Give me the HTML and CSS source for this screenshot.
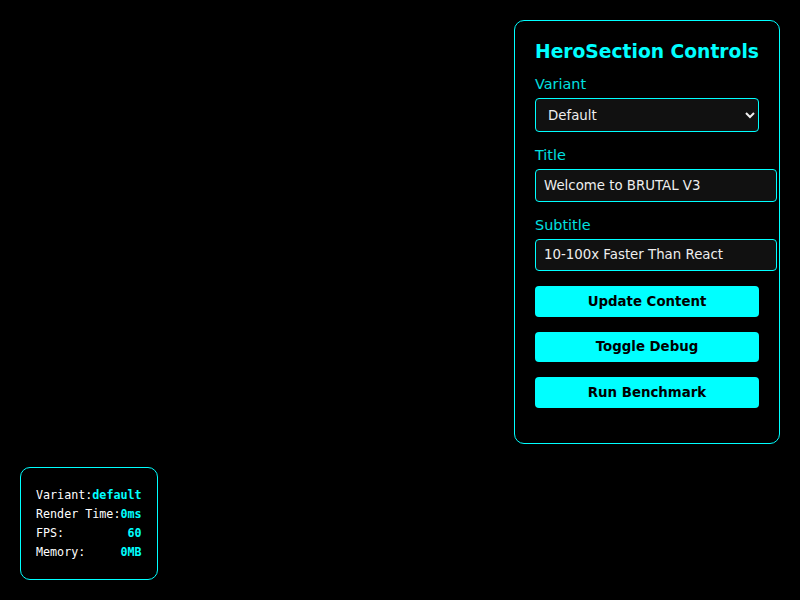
FILE: index.html
```html
<!DOCTYPE html>
<html>
<head>
<meta charset="utf-8">
<link rel="stylesheet" href="styles.css">
</head>
<body>
<div class="controls">
  <h3 class="controls-title">HeroSection Controls</h3>
  <div class="group">
    <label class="label">Variant</label>
    <select class="select">
      <option>Default</option>
      <option>Minimal</option>
      <option>Split</option>
    </select>
  </div>
  <div class="group">
    <label class="label">Title</label>
    <input class="input" type="text" value="Welcome to BRUTAL V3">
  </div>
  <div class="group">
    <label class="label">Subtitle</label>
    <input class="input" type="text" value="10-100x Faster Than React">
  </div>
  <button class="btn">Update Content</button>
  <button class="btn">Toggle Debug</button>
  <button class="btn">Run Benchmark</button>
</div>

<div class="debug">
  <div class="row"><span class="key">Variant:</span><span class="val">default</span></div>
  <div class="row"><span class="key">Render Time:</span><span class="val">0ms</span></div>
  <div class="row"><span class="key">FPS:</span><span class="val">60</span></div>
  <div class="row"><span class="key">Memory:</span><span class="val">0MB</span></div>
</div>
</body>
</html>
```

FILE: styles.css
```css
html, body {
  margin: 0;
  padding: 0;
  background: #000;
  height: 100%;
  font-family: "DejaVu Sans", sans-serif;
  color: #fff;
}

.controls {
  position: fixed;
  top: 20px;
  right: 20px;
  width: 224px;
  padding: 20px;
  border: 1px solid #0ff;
  border-radius: 10px;
  background: #000;
}

.controls-title {
  margin: 0 0 14px;
  font-size: 18.7px;
  font-weight: bold;
  color: #0ff;
  line-height: 21px;
  white-space: nowrap;
}

.group {
  margin-bottom: 15px;
}

.label {
  display: block;
  font-size: 14.4px;
  line-height: 17px;
  color: #00e0e0;
  margin-bottom: 5px;
}

.select {
  display: block;
  width: 100%;
  height: 34px;
  padding: 0 8px;
  background: #111;
  color: #eee;
  border: 1px solid #0ff;
  border-radius: 4px;
  font-family: "DejaVu Sans", sans-serif;
  font-size: 13.333px;
}

.input {
  display: block;
  width: 100%;
  height: 14.5px;
  padding: 8px 8px;
  background: #111;
  color: #eee;
  border: 1px solid #0ff;
  border-radius: 4px;
  font-family: "DejaVu Sans", sans-serif;
  font-size: 13.333px;
}

.btn {
  display: block;
  width: 100%;
  height: 30.5px;
  margin: 0 0 15px;
  padding: 0;
  background: #0ff;
  color: #000;
  border: none;
  border-radius: 4px;
  font-family: "DejaVu Sans", sans-serif;
  font-size: 13.333px;
  font-weight: bold;
}

.debug {
  position: fixed;
  left: 20px;
  bottom: 20px;
  padding: 15px;
  border: 1px solid #0ff;
  border-radius: 10px;
  background: #000;
  font-family: "DejaVu Sans Mono", monospace;
  font-size: 11.7px;
}

.row {
  display: flex;
  justify-content: space-between;
  line-height: 14px;
  margin: 5px 0;
}

.key {
  color: #fff;
}

.val {
  color: #0ff;
  font-weight: bold;
}
```
